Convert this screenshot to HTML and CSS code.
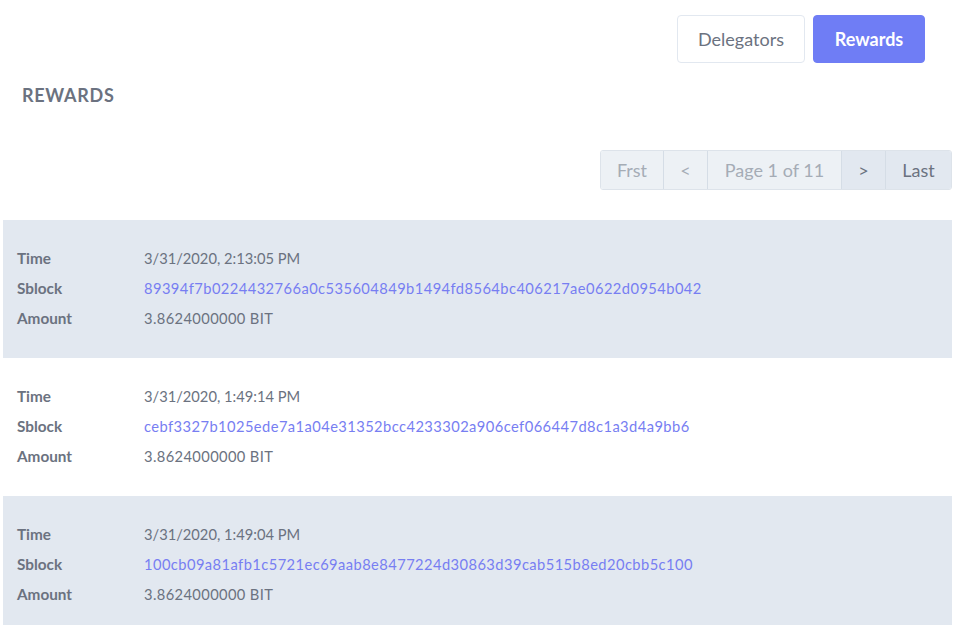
FILE: index.html
```html
<!DOCTYPE html>
<html>
<head>
<meta charset="utf-8">
<link rel="stylesheet" href="styles.css">
</head>
<body>
<div class="page">
  <div class="tabs">
    <button class="tab">Delegators</button>
    <button class="tab active">Rewards</button>
  </div>
  <h2 class="title">REWARDS</h2>
  <div class="pager-row">
    <div class="pager">
      <span class="pg dim first">Frst</span>
      <span class="pg dim arrow">&lt;</span>
      <span class="pg dim wide">Page 1 of 11</span>
      <span class="pg arrow">&gt;</span>
      <span class="pg last">Last</span>
    </div>
  </div>
  <div class="list">
    <div class="item shade">
      <div class="row"><span class="lbl">Time</span><span class="val">3/31/2020, 2:13:05 PM</span></div>
      <div class="row"><span class="lbl">Sblock</span><span class="val link">89394f7b0224432766a0c535604849b1494fd8564bc406217ae0622d0954b042</span></div>
      <div class="row"><span class="lbl">Amount</span><span class="val amount">3.8624000000 BIT</span></div>
    </div>
    <div class="item">
      <div class="row"><span class="lbl">Time</span><span class="val">3/31/2020, 1:49:14 PM</span></div>
      <div class="row"><span class="lbl">Sblock</span><span class="val link">cebf3327b1025ede7a1a04e31352bcc4233302a906cef066447d8c1a3d4a9bb6</span></div>
      <div class="row"><span class="lbl">Amount</span><span class="val amount">3.8624000000 BIT</span></div>
    </div>
    <div class="item shade">
      <div class="row"><span class="lbl">Time</span><span class="val">3/31/2020, 1:49:04 PM</span></div>
      <div class="row"><span class="lbl">Sblock</span><span class="val link">100cb09a81afb1c5721ec69aab8e8477224d30863d39cab515b8ed20cbb5c100</span></div>
      <div class="row"><span class="lbl">Amount</span><span class="val amount">3.8624000000 BIT</span></div>
    </div>
  </div>
</div>
</body>
</html>
```
FILE: styles.css
```css
* { box-sizing: border-box; }
html, body { margin: 0; padding: 0; background: #fff; }
body {
  font-family: "Lato", "Noto Sans", sans-serif;
  color: #6b7280;
  overflow: hidden;
}
.page {
  padding: 15px 1px 0 3px;
}
.tabs {
  display: flex;
  justify-content: flex-end;
  gap: 8px;
  padding-right: 27px;
}
.tab {
  height: 48px;
  padding: 0;
  border: 1px solid #e2e8f0;
  border-radius: 4px;
  background: #fff;
  color: #6b7280;
  font-family: inherit;
  font-size: 18px;
  font-weight: 400;
  width: 128px;
}
.tab.active {
  background: #6f7df5;
  border-color: #6f7df5;
  color: #fff;
  font-weight: 700;
  width: 112px;
}
.title {
  margin: 22px 0 0 19px;
  font-size: 18px;
  font-weight: 700;
  line-height: 20px;
  color: #6b7280;
  letter-spacing: 0.7px;
}
.pager-row {
  display: flex;
  justify-content: flex-end;
  margin-top: 45px;
}
.pager {
  display: flex;
  border: 1px solid #dde3ea;
  border-radius: 3px;
  overflow: hidden;
  height: 40px;
}
.pg {
  display: flex;
  align-items: center;
  justify-content: center;
  font-size: 18px;
  background: #e2e8f0;
  color: #6b7280;
  border-left: 1px solid #d5dde6;
}
.pg.first { width: 62px; border-left: none; }
.pg.arrow { width: 44px; }
.pg.wide { width: 134px; }
.pg.last { width: 66px; }
.pg.dim {
  background: #edf1f5;
  color: #a5acb5;
}
.list {
  margin-top: 30px;
}
.item {
  padding: 23px 14px 25px;
}
.item.shade { background: #e2e8f0; }
.row {
  display: flex;
  height: 30px;
  align-items: center;
  font-size: 14.7px;
}
.lbl {
  width: 127px;
  font-size: 15.3px;
  font-weight: 700;
  color: #6b7280;
}
.val { color: #6b7280; }
.val.amount { letter-spacing: 0.38px; }
.val.link { color: #777ef2; letter-spacing: 0.43px; }
```
